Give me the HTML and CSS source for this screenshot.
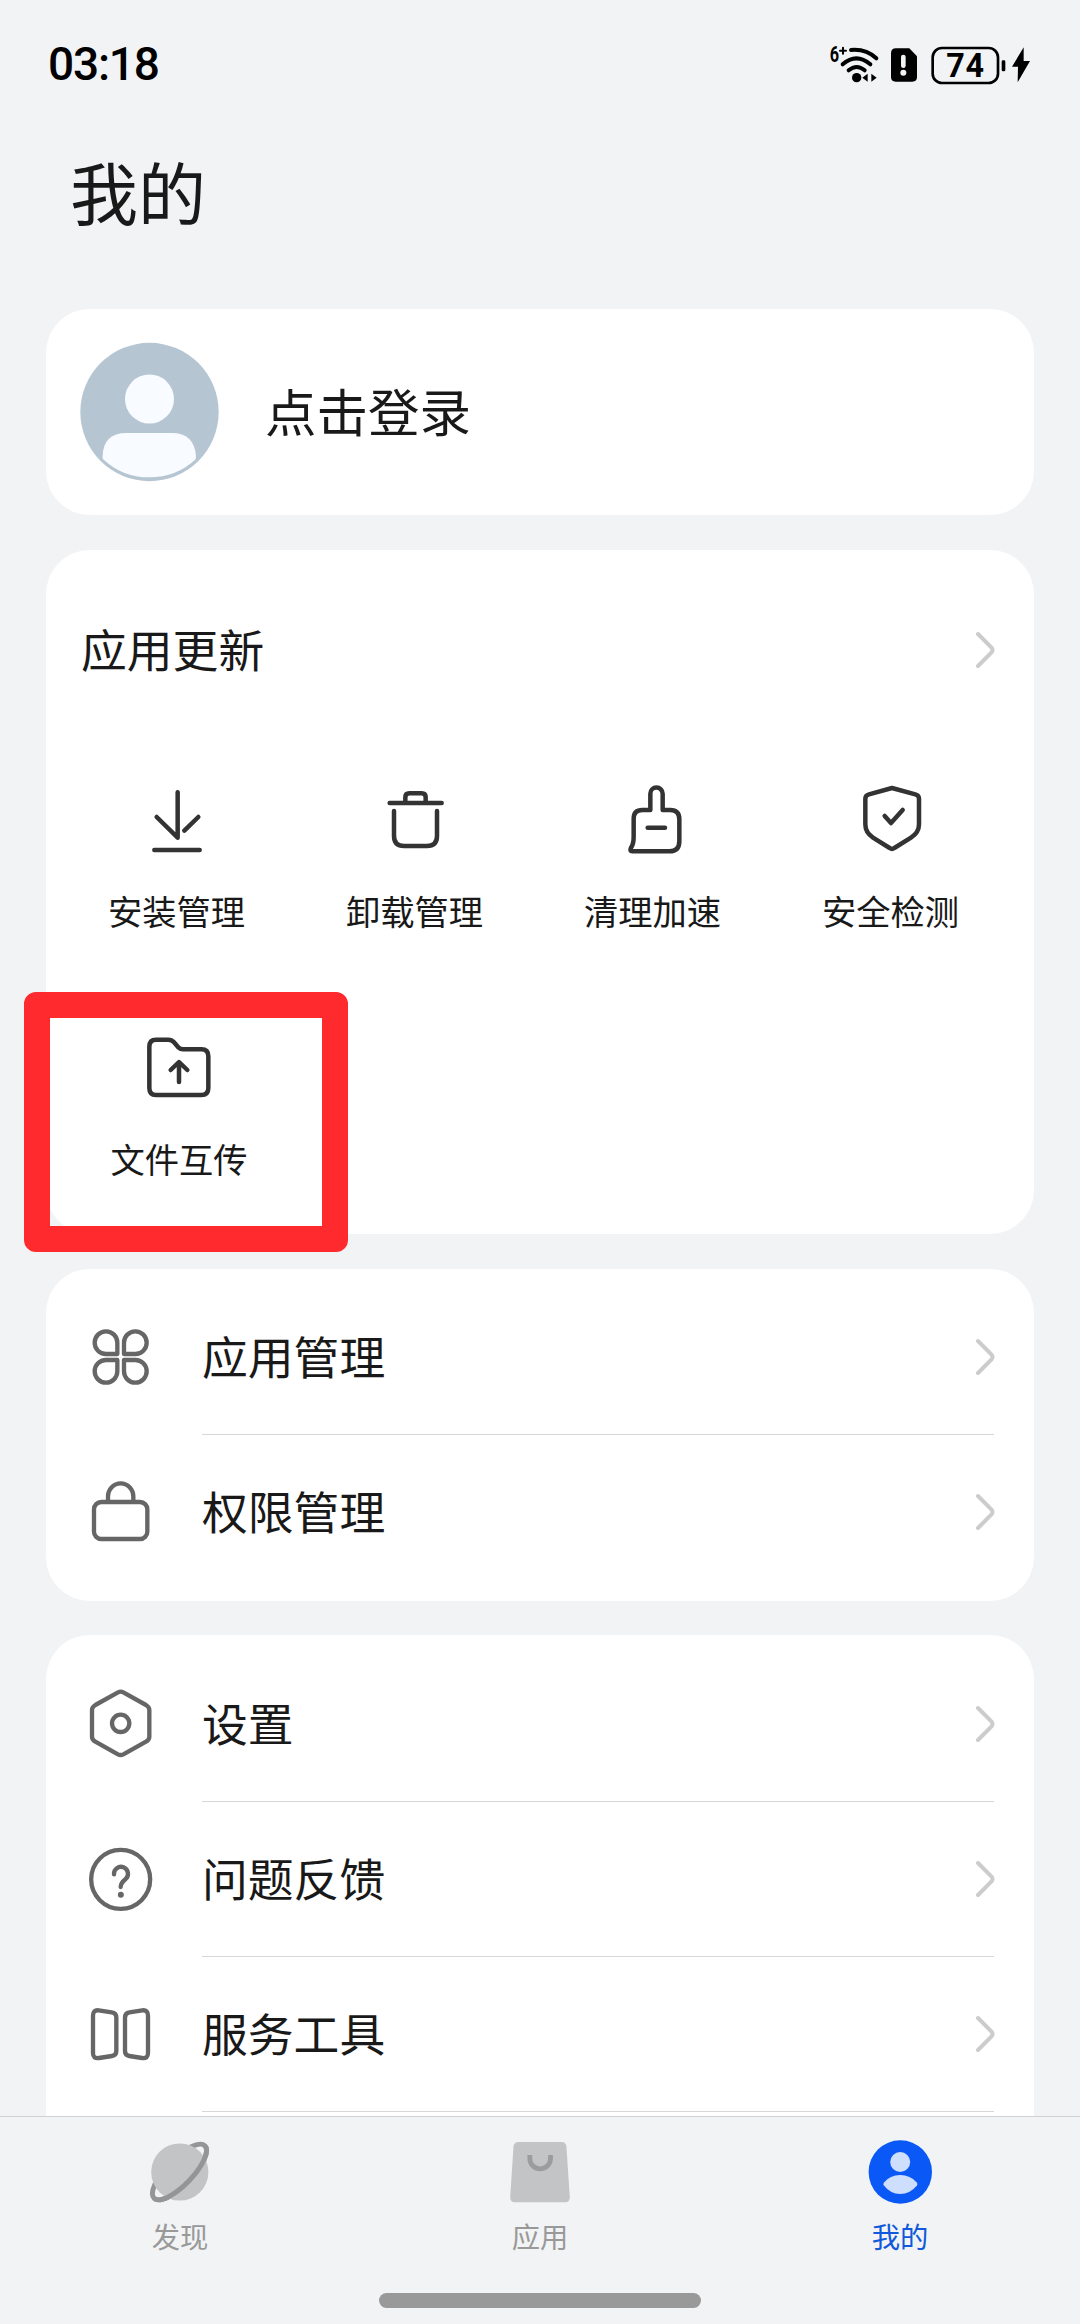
FILE: index.html
```html
<!DOCTYPE html>
<html lang="zh-CN">
<head>
<meta charset="utf-8">
<title>我的</title>
<link rel="stylesheet" href="styles.css">
</head>
<body>
<div class="screen">
  <header class="status">
    <span class="clock">03:18</span>
    <svg class="status-icons" viewBox="75 60 630 150">
      <text x="89" y="127" font-size="66" font-weight="700" textLength="28" lengthAdjust="spacingAndGlyphs">6</text>
      <path class="st" stroke-width="6" d="M120 92h18M129 83v18"/>
      <g class="st" stroke-width="12">
        <path d="M153 90Q198 86 229 115"/>
        <path d="M128 133Q169 97 211 133"/>
        <path d="M146 151Q170 131 194 151"/>
      </g>
      <circle cx="170" cy="173" r="14"/>
      <path d="M187 173l16-12v24zM230 173l-16-12v24z"/>
      <path d="M288 85h40l23 24v62q0 14-14 14h-50q-14 0-14-14v-71q0-15 15-15z"/>
      <path class="st-light" stroke-width="14" d="M310 111v26"/><circle class="light" cx="310" cy="158" r="9"/>
      <rect class="st" x="398" y="84" width="196" height="105" rx="28" stroke-width="8"/>
      <text x="439" y="172" font-size="97" font-weight="700" textLength="113">74</text>
      <rect x="605" y="121" width="11" height="33" rx="4"/>
      <path d="M671 82l-35 58h18l-1 47 37-64h-19z"/>
    </svg>
  </header>
  <h1 class="title">我的</h1>

  <main class="content">
    <section class="card login">
      <svg class="avatar" viewBox="150 156 420 420">
        <circle cx="358.500" cy="366" r="207.500" fill="#b6c5d2"/>
        <circle cx="358.500" cy="327" r="73.500" fill="#f8fbff"/>
        <path fill="#f8fbff" d="M218 498Q220 429 290 429H426Q492 429 498 498L497 508Q440 562 358 562Q276 562 218 506Z"/>
      </svg>
      <span class="login-text">点击登录</span>
    </section>

    <section class="card tools">
      <div class="tools-head">
        <span>应用更新</span>
        <svg class="chevron" viewBox="0 0 20 38"><path d="M3 3L16.500 16.500Q18.500 19 16.500 21.500L3 35"/></svg>
      </div>
      <div class="grid">
        <div class="tool">
          <svg class="tool-icon" viewBox="330 735 216 216"><path d="M440 757V893L377 831M502 831L460 872M370 930H506"/></svg>
          <span>安装管理</span>
        </div>
        <div class="tool">
          <svg class="tool-icon" viewBox="1044 735 216 216"><path d="M1076 789H1232M1123 789V772Q1123 760 1135 760H1172Q1184 760 1184 772V789M1089 813V888Q1089 918 1119 918H1188Q1218 918 1218 888V813"/></svg>
          <span>卸载管理</span>
        </div>
        <div class="tool">
          <svg class="tool-icon" viewBox="228 735 216 216"><path d="M328 810V761A18.500 18.500 0 0 1 365 761V810H388Q415 810 415 838V903Q415 934 386 934H274Q265 934 270 923Q278 912 278 890V836Q278 810 304 810ZM320 863H372"/></svg>
          <span>清理加速</span>
        </div>
        <div class="tool">
          <svg class="tool-icon" viewBox="942 735 216 216"><path d="M1053 744L1123 763Q1134 766 1134 776V853Q1134 878 1110 893L1060 924Q1053 929 1046 924L996 893Q973 878 973 853V776Q973 766 984 763ZM1031 828L1050 849L1085 810"/></svg>
          <span>安全检测</span>
        </div>
        <div class="tool tool-marked">
          <svg class="tool-icon" viewBox="429 188 216 216"><path d="M468 208H505Q515 208 522 216L536 232Q541 237 549 237H604Q625 237 625 258V353Q625 374 604 374H468Q448 374 448 353V229Q448 208 468 208ZM537 335V277M512 299L537 275L562 299"/></svg>
          <span>文件互传</span>
        </div>
      </div>
    </section>

    <section class="card list list-manage">
      <div class="row">
        <svg class="row-icon" viewBox="165 240 216 219"><path d="M262 342H228A34 34 0 1 1 262 308ZM282 342H316A34 34 0 1 0 282 308ZM262 360H228A34 34 0 1 0 262 394ZM282 360H316A34 34 0 1 1 282 394Z"/></svg>
        <span>应用管理</span>
        <svg class="chevron" viewBox="0 0 20 38"><path d="M3 3L16.500 16.500Q18.500 19 16.500 21.500L3 35"/></svg>
      </div>
      <div class="row">
        <svg class="row-icon" viewBox="165 705 216 219"><rect x="192" y="786" width="160" height="111" rx="22"/><path d="M234 784V770A38 40 0 0 1 310 770V784"/></svg>
        <span>权限管理</span>
        <svg class="chevron" viewBox="0 0 20 38"><path d="M3 3L16.500 16.500Q18.500 19 16.500 21.500L3 35"/></svg>
      </div>
    </section>

    <section class="card list list-more">
      <div class="row">
        <svg class="row-icon" viewBox="165 201 216 219"><path d="M264 217Q272 213 280 217L348 255Q358 261 358 270V350Q358 359 348 365L280 403Q272 407 264 403L196 365Q186 359 186 350V270Q186 261 196 255Z"/><circle cx="272" cy="310" r="26"/></svg>
        <span>设置</span>
        <svg class="chevron" viewBox="0 0 20 38"><path d="M3 3L16.500 16.500Q18.500 19 16.500 21.500L3 35"/></svg>
      </div>
      <div class="row">
        <svg class="row-icon" viewBox="165 666 216 219"><circle cx="272" cy="778" r="88.500"/><path d="M252 763A21 21 0 1 1 287 777Q272 789 272 801"/><circle class="dot" cx="272.500" cy="824" r="9"/></svg>
        <span>问题反馈</span>
        <svg class="chevron" viewBox="0 0 20 38"><path d="M3 3L16.500 16.500Q18.500 19 16.500 21.500L3 35"/></svg>
      </div>
      <div class="row">
        <svg class="row-icon" viewBox="165 1131 216 219"><path d="M206 1171L245 1177Q259 1179 259 1193V1293Q259 1306 246 1308L207 1314Q189 1317 189 1299V1187Q189 1169 206 1171ZM337 1171L298 1177Q285 1179 285 1193V1293Q285 1306 298 1308L336 1314Q354 1317 354 1299V1187Q354 1169 337 1171Z"/></svg>
        <span>服务工具</span>
        <svg class="chevron" viewBox="0 0 20 38"><path d="M3 3L16.500 16.500Q18.500 19 16.500 21.500L3 35"/></svg>
      </div>
      <div class="row"></div>
    </section>
    <div class="highlight"></div>
  </main>

  <nav class="tabs">
    <div class="tab">
      <svg class="tab-icon" viewBox="0 0 64 64">
        <g fill="none" stroke="#949597" stroke-width="5" transform="rotate(-46 31.500 32)"><ellipse cx="31.500" cy="32" rx="36.500" ry="13"/></g>
        <circle cx="31.800" cy="32" r="28.600" fill="#c3c4c6"/>
        <path fill="none" stroke="#949597" stroke-width="5" transform="rotate(-46 31.500 32)" d="M-5 32A36.500 13 0 0 0 68 32"/>
      </svg>
      <span>发现</span>
    </div>
    <div class="tab">
      <svg class="tab-icon" viewBox="0 0 64 64">
        <path fill="#c3c4c6" d="M10.500 2H53.500Q58 2 58.400 6.500L61.800 57Q62 62.300 57 62.300H7Q2 62.300 2.200 57L5.500 6.500Q6 2 10.500 2Z"/>
        <path fill="none" stroke="#9b9c9e" stroke-width="4.800" d="M21.800 15V18.500A10.300 10.300 0 0 0 42.500 18.500V15"/>
      </svg>
      <span>应用</span>
    </div>
    <div class="tab active">
      <svg class="tab-icon" viewBox="0 0 64 64">
        <circle cx="32.300" cy="32" r="31.700" fill="#0a59f7"/>
        <circle cx="32.200" cy="22" r="10" fill="#cedefd"/>
        <path fill="#cedefd" d="M15.500 45Q15 44 16 42.500Q22 35 32.200 35T48.800 42.500Q50 44 49 45.500Q42 54 32.200 54T15.500 45Z"/>
      </svg>
      <span>我的</span>
    </div>
    <div class="home-bar"></div>
  </nav>
</div>
</body>
</html>
```

FILE: styles.css
```css
* { box-sizing: border-box; }

body {
  margin: 0;
  background: #f1f3f5;
  color: #191919;
  font-family: "Noto Sans CJK SC", sans-serif;
}

.screen {
  display: flex;
  flex-direction: column;
  width: 1080px;
  height: 2324px;
  overflow: hidden;
}

.status {
  display: flex;
  justify-content: space-between;
  align-items: flex-start;
  height: 130px;
  padding: 40px 45px 0 48px;
}

.clock {
  font: 500 46px/48px Roboto, sans-serif;
  letter-spacing: -1.200px;
  color: #000;
}

.status-icons {
  width: 210px;
  height: 50px;
  font-family: Roboto, sans-serif;
}

.st { fill: none; stroke: #000; stroke-linecap: round; }
.st-light { fill: none; stroke: #f1f3f5; stroke-linecap: round; }
.light { fill: #f1f3f5; }

.title {
  height: 179px;
  margin: 0;
  padding: 11px 70px 0;
  font-size: 68px;
  font-weight: 400;
  line-height: 100px;
}

.content {
  position: relative;
  flex: 1;
  min-height: 0;
  display: flex;
  flex-direction: column;
  gap: 35px;
  padding: 0 46px;
  overflow: hidden;
}

.card {
  flex: none;
  background: #fff;
  border-radius: 44px;
}

.login {
  display: flex;
  align-items: center;
  gap: 45px;
  height: 206px;
  padding-left: 34px;
}

.avatar { width: 140px; height: 140px; }

.login-text { padding-bottom: 5px; font-size: 51.500px; line-height: 70px; }

.tools { height: 684px; }

.tools-head {
  display: flex;
  justify-content: space-between;
  align-items: center;
  height: 200px;
  padding: 0 39px 0 35px;
  font-size: 45.800px;
}

.tools-head span { padding-bottom: 5px; }

.chevron {
  width: 20px;
  height: 38px;
  fill: none;
  stroke: #ccc;
  stroke-width: 4;
  stroke-linecap: round;
}

.grid {
  display: grid;
  grid-template-columns: repeat(4, 238px);
  row-gap: 99px;
  padding: 35px 0 0 11.500px;
}

.tool {
  display: flex;
  flex-direction: column;
  align-items: center;
  gap: 29px;
  font-size: 34.300px;
  line-height: 48px;
}

.tool-marked { padding-left: 5px; }

.tool-icon {
  width: 72px;
  height: 72px;
  fill: none;
  stroke: #333;
  stroke-width: 13.500;
  stroke-linecap: round;
  stroke-linejoin: round;
}

.list-manage { height: 332px; padding-top: 10px; }
.list-more { height: 640px; padding-top: 11px; margin-top: -1px; }

.row {
  display: flex;
  align-items: center;
  height: 155px;
  padding: 0 39px;
  font-size: 45.800px;
  background: linear-gradient(#d6d8d8, #d6d8d8) 156px 0 / 792px 1px no-repeat;
}

.row:first-child { background: none; }

.row span { flex: 1; padding: 0 0 4px 45px; }

.row-icon {
  width: 72px;
  height: 73px;
  fill: none;
  stroke: #666;
  stroke-width: 13;
  stroke-linecap: round;
  stroke-linejoin: round;
}

.dot { fill: #666; stroke: none; }

.highlight {
  position: absolute;
  left: 24px;
  top: 683px;
  width: 324px;
  height: 260px;
  border: 26px solid #ff2a2d;
  border-radius: 12px;
}

.tabs {
  display: grid;
  grid-template-columns: repeat(3, 1fr);
  grid-template-rows: 176px 15px;
  height: 208px;
  border-top: 1px solid #cfd1d2;
}

.tab {
  display: flex;
  flex-direction: column;
  align-items: center;
  gap: 12px;
  padding-top: 23px;
  font-size: 28.300px;
  line-height: 40px;
  color: #999;
}

.tab.active { color: #0f59da; }

.tab-icon { width: 64px; height: 64px; }

.home-bar {
  grid-column: 1 / -1;
  justify-self: center;
  width: 322px;
  height: 15px;
  border-radius: 8px;
  background: #999;
}
```
